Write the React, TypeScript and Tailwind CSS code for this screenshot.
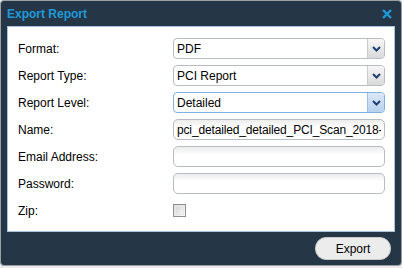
import * as React from "react";

function Chevron() {
  return (
    <svg width="9" height="6" viewBox="0 0 9 6">
      <path d="M1 1 L4.5 4.5 L8 1" fill="none" stroke="#1f3f73" strokeWidth="2" />
    </svg>
  );
}

function SelectBox({ value, focused }: { value: string; focused?: boolean }) {
  return (
    <div
      className={`flex h-[21px] w-[212px] overflow-hidden rounded-[4px] border bg-white ${
        focused ? "border-[#7fb0e2]" : "border-[#b8bcc4]"
      }`}
    >
      <div className="flex flex-1 items-center pl-[3px] text-[12px] text-black">{value}</div>
      <div
        className={`flex w-[17px] items-center justify-center border-l ${
          focused
            ? "border-[#9cc0e6] bg-gradient-to-b from-[#dbe8f6] to-[#b9d1ee]"
            : "border-[#c9cbcf] bg-gradient-to-b from-[#f7f7f7] to-[#d9d9d9]"
        }`}
      >
        <Chevron />
      </div>
    </div>
  );
}

function TextBox({ value = "" }: { value?: string }) {
  return (
    <input
      readOnly
      value={value}
      className="h-[21px] w-[212px] rounded-[5px] border border-[#b8bcc4] bg-gradient-to-b from-[#ececec] to-white to-[40%] px-[3px] text-[12px] tracking-[-0.15px] text-black outline-none"
      style={{ fontFamily: "'Liberation Sans', Arial, sans-serif" }}
    />
  );
}

function Row({ label, children }: { label: string; children: React.ReactNode }) {
  return (
    <div className="flex h-[27px] items-center">
      <div className="w-[155px] text-[12px] text-black">{label}</div>
      {children}
    </div>
  );
}

export default function App() {
  return (
    <div
      className="h-[268px] w-[402px] bg-[#e9e9e9] pb-[2px]"
      style={{ fontFamily: "'Liberation Sans', Arial, sans-serif" }}
    >
      <div className="flex h-[266px] w-[402px] flex-col rounded-[4px] border border-[#9a9fa6] bg-[#253647] px-[6px]">
        <div className="flex h-[25px] items-center justify-between pr-[3px]">
          <span className="text-[12px] font-bold text-[#1f9ad8]">Export Report</span>
          <svg width="10" height="10" viewBox="0 0 10 10">
            <path d="M1 1 L9 9 M9 1 L1 9" stroke="#1f9ad8" strokeWidth="2.4" />
          </svg>
        </div>
        <div className="flex h-[206px] flex-col border border-[#a8c3e0] bg-white pl-[10px] pt-[8px]">
          <Row label="Format:">
            <SelectBox value="PDF" />
          </Row>
          <Row label="Report Type:">
            <SelectBox value="PCI Report" />
          </Row>
          <Row label="Report Level:">
            <SelectBox value="Detailed" focused />
          </Row>
          <Row label="Name:">
            <TextBox value="pci_detailed_detailed_PCI_Scan_2018-04-10" />
          </Row>
          <Row label="Email Address:">
            <TextBox />
          </Row>
          <Row label="Password:">
            <TextBox />
          </Row>
          <Row label="Zip:">
            <div className="h-[13px] w-[13px] border border-[#8f8f8f] bg-gradient-to-br from-[#dcdcdc] to-[#fafafa] p-[1px]">
              <div className="h-full w-full border border-[#e6e6e6] bg-gradient-to-br from-[#d4d4d4] to-[#f7f7f7]" />
            </div>
          </Row>
        </div>
        <div className="flex flex-1 items-center justify-end pr-[4px]">
          <button className="h-[23px] w-[76px] rounded-[11px] border border-[#c9c9c9] bg-[#ececec] text-[12px] text-black">
            Export
          </button>
        </div>
      </div>
    </div>
  );
}
